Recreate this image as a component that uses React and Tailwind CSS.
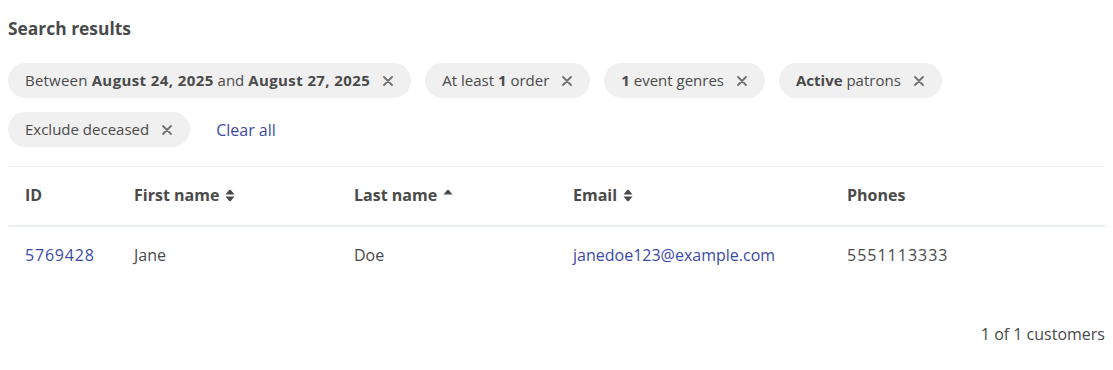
import React from 'react'

function Chip({ children }) {
  return (
    <span className="inline-flex items-center h-[35px] pl-[17px] pr-[18px] rounded-full bg-[#f0f0f0] text-[15px] text-[#4a4a4a]">
      <span>{children}</span>
      <svg className="ml-[13px]" width="10" height="10" viewBox="0 0 10 10">
        <path d="M1 1L9 9M9 1L1 9" stroke="#707070" strokeWidth="1.8" strokeLinecap="round" />
      </svg>
    </span>
  )
}

function SortIcon({ up = true, down = true }) {
  return (
    <svg className="ml-[6px]" width="10" height="13" viewBox="0 0 10 13">
      {up && <path d="M0.5 5.5L4.2 1.1Q5 0.3 5.8 1.1L9.5 5.5Z" fill="#4a4a4a" />}
      {down && <path d="M0.5 7.5L4.2 11.9Q5 12.7 5.8 11.9L9.5 7.5Z" fill="#4a4a4a" />}
    </svg>
  )
}

export default function App() {
  return (
    <div className="min-h-screen bg-white px-[8px] pt-[16px] text-[#4a4a4a]" style={{ fontFamily: '"Open Sans", Lato, sans-serif' }}>
      <h2 className="text-[17.4px] font-bold leading-[24px]">Search results</h2>

      <div className="mt-[23px] flex flex-wrap items-center gap-x-[14px] gap-y-[14px]">
        <Chip>
          <span className="tracking-[0.2px]">Between </span>
          <b className="tracking-[0.4px]">August 24, 2025</b> and <b className="tracking-[0.4px]">August 27, 2025</b>
        </Chip>
        <Chip>At least <b>1</b> order</Chip>
        <Chip><b>1</b> event genres</Chip>
        <Chip><b>Active</b> patrons</Chip>
        <Chip>Exclude deceased</Chip>
        <a className="ml-[12px] text-[16px] text-[#3b4aa8]">Clear all</a>
      </div>

      <table className="mt-[19px] w-full border-t border-[#eceff3] text-[16px]">
        <thead>
          <tr className="border-b-2 border-[#e9eef4] h-[59px] text-left">
            <th className="pl-[17px] pb-[1px] w-[126px] font-bold">ID</th>
            <th className="w-[220px] pb-[1px] font-bold"><span className="inline-flex items-center">First name<SortIcon /></span></th>
            <th className="w-[219px] pb-[1px] font-bold"><span className="inline-flex items-center">Last name<SortIcon down={false} /></span></th>
            <th className="w-[274px] pb-[1px] font-bold"><span className="inline-flex items-center">Email<SortIcon /></span></th>
            <th className="pb-[1px] font-bold">Phones</th>
          </tr>
        </thead>
        <tbody>
          <tr className="h-[58px]">
            <td className="pl-[17px]"><a className="text-[#3b4aa8] tracking-[0.8px]">5769428</a></td>
            <td>Jane</td>
            <td>Doe</td>
            <td><a className="text-[#3b4aa8]">janedoe123@example.com</a></td>
            <td className="tracking-[1px]">5551113333</td>
          </tr>
        </tbody>
      </table>

      <div className="mt-[38px] text-right text-[16px]">1 of 1 customers</div>
    </div>
  )
}
